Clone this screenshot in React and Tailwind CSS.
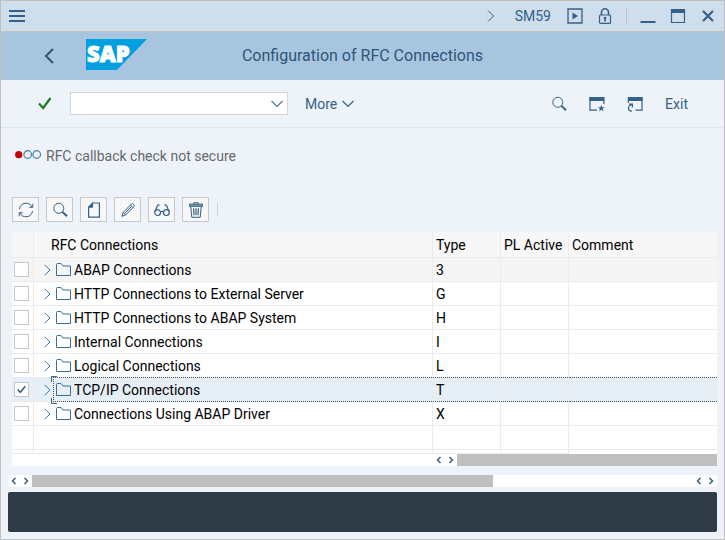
import React, { useState } from "react";

const CONNECTIONS = [
  { name: "ABAP Connections", type: "3", muted: true },
  { name: "HTTP Connections to External Server", type: "G" },
  { name: "HTTP Connections to ABAP System", type: "H" },
  { name: "Internal Connections", type: "I" },
  { name: "Logical Connections", type: "L" },
  { name: "TCP/IP Connections", type: "T" },
  { name: "Connections Using ABAP Driver", type: "X" },
];

function Icon({ size = 16, stroke = 1, className = "", children }) {
  return (
    <svg
      width={size}
      height={size}
      viewBox="0 0 16 16"
      fill="none"
      stroke="currentColor"
      strokeWidth={stroke}
      className={`block shrink-0 ${className}`}
      aria-hidden="true"
    >
      {children}
    </svg>
  );
}

function SearchIcon() {
  return (
    <Icon>
      <circle cx="6.8" cy="6.3" r="5" />
      <path d="M10.4 9.9 15 14.3" strokeWidth="2" />
    </Icon>
  );
}

function SapLogo() {
  return (
    <svg width="61" height="31" viewBox="0 0 61 31" role="img" aria-label="SAP" className="block">
      <path d="M0 0H61L31 31H0Z" fill="#009fdf" />
      <text
        x="1"
        y="23"
        fill="#fff"
        stroke="#fff"
        strokeWidth="1"
        fontSize="22"
        fontWeight="800"
        className="font-['Open_Sans',sans-serif]"
      >
        SAP
      </text>
    </svg>
  );
}

const ACTIONS = [
  {
    label: "Refresh",
    icon: (
      <Icon>
        <path d="M1.5 7A6.6 6.6 0 0 1 14 5M14.5 9A6.6 6.6 0 0 1 2 11" />
        <path d="M14.8 1.8V5.3H11.3M1.2 14.2V10.7H4.7" />
      </Icon>
    ),
  },
  { label: "Display", icon: <SearchIcon /> },
  {
    label: "Create",
    icon: (
      <Icon>
        <path d="M6.5 1H13.4V15.2H2.6V5" strokeWidth="1.2" />
        <path d="M2.2 5.2 6.6 0.8V5.2Z" fill="currentColor" />
      </Icon>
    ),
  },
  {
    label: "Edit",
    icon: (
      <Icon>
        <path d="M2 14.3 3.2 10.3 11.6 1.9Q12.4 1.3 13.2 2.1L14 2.9Q14.7 3.7 14 4.5L5.7 12.9Z" />
        <path d="M10.5 3.2 12.9 5.6M3.2 10.4 5.7 12.9M4.6 11.5 11.5 4.5" />
      </Icon>
    ),
  },
  {
    label: "Change display",
    icon: (
      <Icon>
        <circle cx="3.6" cy="10.6" r="2.9" strokeWidth="1.2" />
        <circle cx="12.4" cy="10.6" r="2.9" strokeWidth="1.2" />
        <path d="M6.4 10Q8 8.6 9.6 10M1 9.5 3.4 3.8Q4 2.3 5.6 3.2M15 9.5 12.6 3.8Q12 2.3 10.4 3.2" strokeWidth="1.2" />
      </Icon>
    ),
  },
  {
    label: "Delete",
    icon: (
      <Icon>
        <path d="M1.5 2.2H14.5V4.3H1.5Z" fill="currentColor" fillOpacity=".6" />
        <path d="M5.7 2V0.8H10.3V2M2.8 5 3.8 15.3H12.2L13.2 5" />
        <path d="M5.6 6.2 6 13.2M8 6.2V13.2M10.4 6.2 10 13.2" strokeWidth="1.2" />
      </Icon>
    ),
  },
];

function Arrow({ left, label }) {
  return (
    <button type="button" aria-label={label} className="flex h-3 w-3 items-center justify-center text-[#346187]">
      <svg width="6" height="8" viewBox="0 0 6 8" fill="none" stroke="currentColor" strokeWidth="1.5" aria-hidden="true">
        <path d={left ? "M4.5 1 1.5 4 4.5 7" : "M1.5 1 4.5 4 1.5 7"} />
      </svg>
    </button>
  );
}

function ChevronDown() {
  return (
    <svg width="12" height="8" viewBox="0 0 12 8" fill="none" stroke="currentColor" strokeWidth="1.2" aria-hidden="true">
      <path d="M.5 1 6 6.5 11.5 1" />
    </svg>
  );
}

function ConnectionRow({ item, selected, onToggle }) {
  const bg = selected ? "bg-[#e6eef6]" : item.muted ? "bg-[#f5f5f5]" : "bg-white";
  const cell = "relative h-6 border-r border-b border-[#ebebeb] p-0";
  const dots = selected ? (
    <span className="pointer-events-none absolute inset-x-0 -top-px -bottom-px border-y border-dotted border-[#41576b]" />
  ) : null;
  return (
    <tr className={bg}>
      <td className={cell}>
        <label className="relative ml-[2px] block h-[15px] w-[15px]">
          <input
            type="checkbox"
            aria-label={item.name}
            checked={selected}
            onChange={onToggle}
            className="block h-[15px] w-[15px] appearance-none border border-[#c5c5cb] bg-white"
          />
          {selected && (
            <Icon size={15} stroke={1.8} className="pointer-events-none absolute inset-0 text-[#346187]">
              <path d="M4 8.2 6.8 11 12 4.6" />
            </Icon>
          )}
        </label>
      </td>
      <td className={cell}>
        <div className="flex items-center pl-[10px]">
          <button type="button" aria-label={`Expand ${item.name}`} className="text-[#427cac]">
            <svg width="7" height="12" viewBox="0 0 7 12" fill="none" stroke="currentColor" aria-hidden="true" className="block">
              <path d="M.7.8 6 6 .7 11.2" />
            </svg>
          </button>
          <svg width="15" height="13" viewBox="0 0 15 13" fill="none" stroke="#346fa0" className="mr-[3px] ml-[5px] block" aria-hidden="true">
            <path d="M.5 12.5V1.5Q.5.5 1.5.5H5L7 3H14.5V12.5Z" />
          </svg>
          <span>{item.name}</span>
        </div>
        {selected && (
          <>
            <span className="pointer-events-none absolute -top-px right-0 -bottom-px left-[19px] border-y border-l border-dotted border-[#41576b]" />
            <svg width="6" height="28" viewBox="0 0 6 28" fill="none" stroke="#346187" className="pointer-events-none absolute -top-[2px] left-[17px]" aria-hidden="true">
              <path d="M6 .5H.5V6M.5 22V27.5H6" />
            </svg>
          </>
        )}
      </td>
      <td className={`${cell} pl-[3px]`}>{item.type}{dots}</td>
      <td className={cell}>{dots}</td>
      <td className="relative h-6 border-b border-[#ebebeb] p-0">{dots}</td>
    </tr>
  );
}

export default function App() {
  const [selected, setSelected] = useState({ T: true });
  const toggle = (type) => setSelected((s) => ({ ...s, [type]: !s[type] }));
  const head = "h-[26px] border-r border-b border-[#ebebeb] p-0 text-left font-normal";

  return (
    <div className="flex min-h-screen flex-col border border-[#bfbfbf] bg-[#eef3f9] font-['Roboto','Liberation_Sans',sans-serif] text-sm text-[#346187]">
      <header>
        <div className="flex h-[31px] items-center border-b border-[#c0c0c0] bg-[#cedeed] pr-2 pl-2">
          <button type="button" aria-label="Menu" className="flex flex-col gap-[3px]">
            <span className="h-[2px] w-4 bg-current" />
            <span className="h-[2px] w-4 bg-current" />
            <span className="h-[2px] w-4 bg-current" />
          </button>
          <div className="ml-auto flex items-center">
            <button type="button" aria-label="Show more">
              <svg width="8" height="12" viewBox="0 0 8 12" fill="none" stroke="currentColor" aria-hidden="true" className="block">
                <path d="M1 .5 6.5 6 1 11.5" />
              </svg>
            </button>
            <span className="ml-5">SM59</span>
            <button type="button" aria-label="Record" className="ml-4">
              <Icon>
                <path d="M1 1H15V15H1Z" strokeWidth="1.3" />
                <path d="M5.5 4.5 11 8 5.5 11.5Z" fill="currentColor" stroke="none" />
              </Icon>
            </button>
            <button type="button" aria-label="Lock" className="ml-[14px]">
              <Icon>
                <rect x="2.5" y="7" width="11" height="8.4" rx="1" strokeWidth="1.2" />
                <path d="M4.5 7V4.3A3.5 3.5 0 0 1 11.5 4.3V7" strokeWidth="1.6" />
                <circle cx="8" cy="10" r="1.3" fill="currentColor" stroke="none" />
                <path d="M8 10V13.4" strokeWidth="1.6" />
              </Icon>
            </button>
            <span className="ml-[13px] h-4 w-px bg-[#b7c3ce]" />
            <button type="button" aria-label="Minimize" className="ml-[13px]">
              <Icon><path d="M.5 14H15.5" strokeWidth="2" /></Icon>
            </button>
            <button type="button" aria-label="Maximize" className="ml-[14px]">
              <Icon>
                <path d="M1.5 1.5H14.5V14.5H1.5Z" strokeWidth="1.2" />
                <path d="M1 3H15" strokeWidth="4" />
              </Icon>
            </button>
            <button type="button" aria-label="Close" className="ml-[14px]">
              <Icon><path d="M3 3 13 13M13 3 3 13" strokeWidth="2.2" /></Icon>
            </button>
          </div>
        </div>

        <div className="grid h-12 grid-cols-[1fr_auto_1fr] items-center bg-[#a8c5df]">
          <div className="flex items-center pl-[43px]">
            <button type="button" aria-label="Back">
              <svg width="10" height="16" viewBox="0 0 10 16" fill="none" stroke="#2e5579" strokeWidth="2" className="block" aria-hidden="true">
                <path d="M9 1 2 8 9 15" />
              </svg>
            </button>
            <div className="ml-8 pb-1"><SapLogo /></div>
          </div>
          <h1 className="text-base text-[#2e5579]">Configuration of RFC Connections</h1>
        </div>
      </header>

      <div className="flex h-12 items-center border-b border-[#dde5ed] pr-9 pl-9">
        <button type="button" aria-label="Confirm" className="text-[#1a7e1a]">
          <Icon><path d="M2 7.5 6.2 12 13.5 2" strokeWidth="2.2" /></Icon>
        </button>
        <div className="relative ml-[17px] w-[218px] text-[#427cac]">
          <select aria-label="Command" defaultValue="" className="block h-[23px] w-full appearance-none border border-[#d5d5d5] bg-white px-2">
            <option value=""></option>
          </select>
          <span className="pointer-events-none absolute inset-y-0 right-[5px] flex items-center"><ChevronDown /></span>
        </div>
        <button type="button" className="ml-[17px] flex items-center gap-[5px]">
          More <ChevronDown />
        </button>
        <div className="ml-auto flex items-center">
          <button type="button" aria-label="Find"><SearchIcon /></button>
          <button type="button" aria-label="New window" className="ml-[22px]">
            <Icon>
              <path d="M8 14.2H1V1.5H14.8V8" strokeWidth="1.2" />
              <path d="M.5 3H15.3" strokeWidth="4" />
              <path d="M12.3 8.8 13.2 11.3H15.8L13.7 12.8 14.5 15.4 12.3 13.8 10.1 15.4 10.9 12.8 8.8 11.3H11.4Z" fill="currentColor" stroke="none" />
            </Icon>
          </button>
          <button type="button" aria-label="Shortcut" className="ml-[22px]">
            <Icon>
              <path d="M1.4 7V2H15V14.2H8.5" strokeWidth="1.2" />
              <path d="M.9 3H15.5" strokeWidth="4" />
              <path d="M5 15.2Q1.2 15 1.4 12Q1.7 9.4 5.2 8.2M2 8.2H5.4V11.5" strokeWidth="1.2" />
            </Icon>
          </button>
          <button type="button" className="ml-[22px]">Exit</button>
        </div>
      </div>

      <main className="flex flex-col">
        <p className="mt-4 flex items-center pl-[14px] leading-6 text-[#66696c]">
          <svg width="27" height="9" viewBox="0 0 27 9" fill="none" className="mr-1 mb-1 block" aria-hidden="true">
            <circle cx="3.7" cy="4.7" r="3.6" fill="#c00000" />
            <circle cx="12.7" cy="4.5" r="3.8" stroke="#427cac" strokeWidth="1.2" />
            <circle cx="21.7" cy="4.5" r="3.8" stroke="#427cac" strokeWidth="1.2" />
          </svg>
          RFC callback check not secure
        </p>

        <div className="mt-[29px] flex items-center gap-[7px] pl-[11px]">
          {ACTIONS.map((a) => (
            <button key={a.label} type="button" aria-label={a.label} className="flex h-[25px] w-[27px] items-center justify-center border border-[#c5c8cc] bg-[#f7f7f7]">
              {a.icon}
            </button>
          ))}
          <span className="ml-px h-[13px] w-px bg-[#cdd2d7]" />
        </div>

        <section className="mt-[10px] mr-[7px] ml-[11px] bg-white text-black">
          <table className="w-full table-fixed border-separate border-spacing-0 leading-5">
            <colgroup>
              <col className="w-[22px]" />
              <col className="w-[399px]" />
              <col className="w-[68px]" />
              <col className="w-[68px]" />
              <col />
            </colgroup>
            <thead>
              <tr className="bg-[#f7f7f7]">
                <th className={head} aria-label="Select" />
                <th className={`${head} pl-[17px]`}>RFC Connections</th>
                <th className={`${head} pl-[3px]`}>Type</th>
                <th className={`${head} pl-[3px] whitespace-nowrap`}>PL Active</th>
                <th className="h-[26px] border-b border-[#ebebeb] p-0 pl-[3px] text-left font-normal">Comment</th>
              </tr>
            </thead>
            <tbody>
              {CONNECTIONS.map((c) => (
                <ConnectionRow key={c.type} item={c} selected={!!selected[c.type]} onToggle={() => toggle(c.type)} />
              ))}
              <tr>
                {[0, 1, 2, 3].map((n) => <td key={n} className="h-6 border-r border-b border-[#ebebeb] p-0" />)}
                <td className="h-6 border-b border-[#ebebeb] p-0" />
              </tr>
              <tr>
                {[0, 1, 2, 3].map((n) => <td key={n} className="h-1 border-r border-b border-[#ebebeb] p-0" />)}
                <td className="h-1 p-0" />
              </tr>
            </tbody>
          </table>
          <div className="flex h-3 items-center pl-[421px]">
            <Arrow left label="Scroll columns left" />
            <Arrow label="Scroll columns right" />
            <div className="h-3 grow bg-[#bfbfbf]" />
          </div>
        </section>

        <div className="mt-[9px] mr-[7px] ml-[7px] flex h-3 items-center bg-white">
          <Arrow left label="Scroll left" />
          <Arrow label="Scroll right" />
          <div className="h-3 w-[65%] bg-[#bfbfbf]" />
          <div className="ml-auto flex">
            <Arrow left label="Scroll to start" />
            <Arrow label="Scroll to end" />
          </div>
        </div>
      </main>

      <footer className="mx-[7px] mt-[5px] mb-[7px] h-10 rounded-[2px] bg-[#2f3c48]" />
    </div>
  );
}
